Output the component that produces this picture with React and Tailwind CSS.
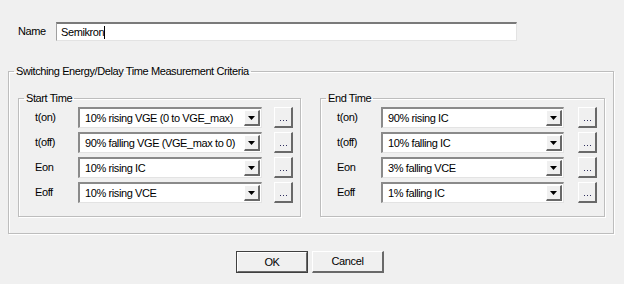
import React from "react";

function Combo({ text, w }) {
  return (
    <div
      className={`${w} h-[21px] flex items-stretch bg-white border-t-2 border-l-2 border-b border-r border-t-[#8a8a8a] border-l-[#8a8a8a] border-b-[#e3e3e3] border-r-[#e3e3e3]`}
    >
      <div className="flex-1 flex items-center pl-[5px] whitespace-nowrap overflow-hidden">{text}</div>
      <div className="w-[16px] my-[1px] mr-[1px] bg-[#f0f0f0] border-t border-l border-b-2 border-r-2 border-t-white border-l-white border-b-[#696969] border-r-[#696969] flex items-center justify-center">
        <svg width="7" height="4" viewBox="0 0 7 4">
          <path d="M0 0H7L3.5 4Z" fill="#000" />
        </svg>
      </div>
    </div>
  );
}

function Dots({ w }) {
  return (
    <div
      className={`${w} h-[21px] bg-[#f0f0f0] border-t border-l border-b-2 border-r-2 border-t-white border-l-white border-b-[#696969] border-r-[#696969] flex items-end justify-center pb-[5px] pl-[1px]`}
    >
      <div className="flex gap-[2px]">
        <span className="w-[1px] h-[1px] bg-[#303060]" />
        <span className="w-[1px] h-[1px] bg-[#303060]" />
        <span className="w-[1px] h-[1px] bg-[#303060]" />
      </div>
    </div>
  );
}

function Group({ title, children, className = "" }) {
  return (
    <fieldset className={`border border-[#bdbdbd] shadow-[inset_1px_1px_0_#fff,1px_1px_0_#fff] ${className}`}>
      <legend className="ml-[5px] px-[2px] leading-[14px] h-[14px]">{title}</legend>
      {children}
    </fieldset>
  );
}

function Rows({ rows, labelW, comboW, gap, btnW }) {
  return (
    <div className="flex flex-col gap-[4px]">
      {rows.map(([l, v]) => (
        <div key={l} className="flex items-center">
          <div className={`${labelW}`}>{l}</div>
          <Combo text={v} w={comboW} />
          <div className={gap} />
          <Dots w={btnW} />
        </div>
      ))}
    </div>
  );
}

export default function App() {
  return (
    <div
      className="w-[624px] h-[284px] bg-[#f0f0f0] text-black text-[11px] tracking-[-0.4px] overflow-hidden"
      style={{ fontFamily: '"Liberation Sans", Arial, sans-serif' }}
    >
      <div className="flex items-center pt-[22px] pl-[18px]">
        <div className="w-[38px]">Name</div>
        <div className="w-[461px] h-[19px] bg-white border-t-2 border-l border-b border-r border-t-[#7a7a7a] border-l-[#a0a0a0] border-b-[#e3e3e3] border-r-[#e3e3e3] flex items-center pl-[4px]">
          <span>Semikron</span>
          <span className="w-[1px] h-[13px] bg-black" />
        </div>
      </div>

      <Group title="Switching Energy/Delay Time Measurement Criteria" className="ml-[8px] w-[606px] mt-[23px]">
        <div className="flex pl-[9px] pt-[13px] pb-[16px]">
          <Group title="Start Time" className="w-[283px]">
            <div className="pl-[16px] pt-[2px] pb-[13px]">
              <Rows
                rows={[
                  ["t(on)", "10% rising VGE (0 to VGE_max)"],
                  ["t(off)", "90% falling VGE (VGE_max to 0)"],
                  ["Eon", "10% rising IC"],
                  ["Eoff", "10% rising VCE"],
                ]}
                labelW="w-[43px]"
                comboW="w-[184px]"
                gap="w-[12px]"
                btnW="w-[19px]"
              />
            </div>
          </Group>
          <div className="w-[19px]" />
          <Group title="End Time" className="w-[285px]">
            <div className="pl-[16px] pt-[2px] pb-[13px]">
              <Rows
                rows={[
                  ["t(on)", "90% rising IC"],
                  ["t(off)", "10% falling IC"],
                  ["Eon", "3% falling VCE"],
                  ["Eoff", "1% falling IC"],
                ]}
                labelW="w-[44px]"
                comboW="w-[183px]"
                gap="w-[14px]"
                btnW="w-[19px]"
              />
            </div>
          </Group>
        </div>
      </Group>

      <div className="flex gap-[4px] pl-[236px] mt-[17px]">
        <div className="w-[72px] h-[22px] border border-[#404040] bg-[#f0f0f0] flex">
          <div className="flex-1 border-t border-l border-b border-r border-t-white border-l-white border-b-[#696969] border-r-[#696969] flex items-center justify-center">
            OK
          </div>
        </div>
        <div className="w-[72px] h-[22px] bg-[#f0f0f0] border-t border-l border-b-2 border-r-2 border-t-white border-l-white border-b-[#696969] border-r-[#696969] flex items-center justify-center">
          Cancel
        </div>
      </div>
    </div>
  );
}
